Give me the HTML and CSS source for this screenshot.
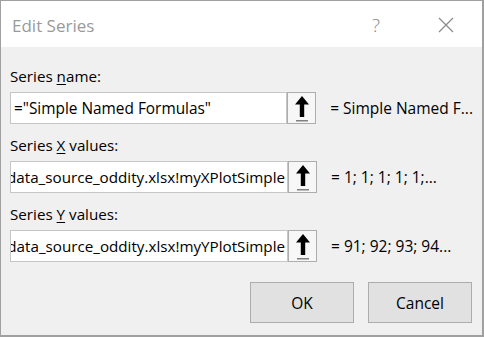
FILE: index.html
```html
<!DOCTYPE html>
<html>
<head>
<meta charset="utf-8">
<link rel="stylesheet" href="styles.css">
</head>
<body>
<div class="dialog">
  <div class="titlebar">
    <div class="title">Edit Series</div>
    <div class="help">?</div>
    <div class="close">
      <svg width="16" height="16" viewBox="0 0 16 16"><path d="M1 1L15 15M15 1L1 15" stroke="#8a8a8a" stroke-width="1.2" fill="none"/></svg>
    </div>
  </div>
  <div class="body">
    <div class="label">Series <u>n</u>ame:</div>
    <div class="row">
      <div class="field"><span class="val">="Simple Named Formulas"</span></div>
      <div class="pick"><svg width="14" height="26" viewBox="0 0 14 26"><path d="M7 0L0 8.5H4.8V21H9.2V8.5H14Z" fill="#000"/><rect x="1" y="24" width="12" height="1.5" fill="#808080"/></svg></div>
      <div class="result">= Simple Named F...</div>
    </div>
    <div class="label">Series <u>X</u> values:</div>
    <div class="row">
      <div class="field clip"><span class="val">data_source_oddity.xlsx!myXPlotSimple</span></div>
      <div class="pick"><svg width="14" height="26" viewBox="0 0 14 26"><path d="M7 0L0 8.5H4.8V21H9.2V8.5H14Z" fill="#000"/><rect x="1" y="24" width="12" height="1.5" fill="#808080"/></svg></div>
      <div class="result">= 1; 1; 1; 1; 1;...</div>
    </div>
    <div class="label">Series <u>Y</u> values:</div>
    <div class="row">
      <div class="field clip"><span class="val">data_source_oddity.xlsx!myYPlotSimple</span></div>
      <div class="pick"><svg width="14" height="26" viewBox="0 0 14 26"><path d="M7 0L0 8.5H4.8V21H9.2V8.5H14Z" fill="#000"/><rect x="1" y="24" width="12" height="1.5" fill="#808080"/></svg></div>
      <div class="result">= 91; 92; 93; 94...</div>
    </div>
    <div class="buttons">
      <div class="btn">OK</div>
      <div class="btn">Cancel</div>
    </div>
  </div>
</div>
</body>
</html>
```
FILE: styles.css
```css
html, body {
  margin: 0;
  padding: 0;
  background: #fff;
}
.dialog {
  width: 484px;
  height: 337px;
  box-sizing: border-box;
  border: 1px solid #a0a0a0;
  border-right-width: 2px;
  border-bottom-width: 2px;
  display: flex;
  flex-direction: column;
  font-family: "Open Sans", "Noto Sans", sans-serif;
  color: #000;
}
.titlebar {
  height: 46px;
  background: #fff;
  display: flex;
  align-items: center;
  flex-shrink: 0;
}
.title {
  font-size: 17px;
  color: #9a9a9a;
  padding-left: 11px;
  flex: 1;
  padding-top: 2px;
}
.help {
  font-size: 19px;
  font-weight: 300;
  color: #8a8a8a;
  width: 20px;
  margin-right: 46px;
  padding-top: 2px;
}
.close {
  width: 16px;
  height: 16px;
  margin-right: 28px;
  display: flex;
  padding-top: 2px;
}
.body {
  flex: 1;
  background: #f0f0f0;
  padding: 17px 9px 0 9px;
  font-size: 15px;
  display: flex;
  flex-direction: column;
}
.label {
  height: 24px;
  line-height: 24px;
  margin-bottom: 4px;
  font-size: 15.2px;
}
.label u {
  text-decoration-thickness: 1px;
  text-underline-offset: 2px;
}
.row {
  display: flex;
  align-items: center;
  height: 32px;
  margin-bottom: 9px;
}
.field {
  width: 278px;
  height: 32px;
  box-sizing: border-box;
  border: 1px solid #c6c6c6;
  background: #fff;
  display: flex;
  align-items: center;
  padding-left: 3px;
  overflow: hidden;
  white-space: nowrap;
  font-size: 15.4px;
}
.field.clip {
  justify-content: flex-end;
  padding-left: 0;
  padding-right: 2px;
  font-size: 15.2px;
}
.pick {
  width: 29px;
  height: 32px;
  box-sizing: border-box;
  border: 1px solid #adadad;
  background: #f7f7f7;
  display: flex;
  align-items: center;
  justify-content: center;
  padding-top: 1px;
}
.result {
  margin-left: 14px;
  font-size: 15.5px;
  white-space: nowrap;
}
.buttons {
  display: flex;
  justify-content: flex-end;
  gap: 14px;
  padding-right: 1px;
  margin-top: 11px;
}
.btn {
  width: 104px;
  height: 41px;
  box-sizing: border-box;
  border: 1px solid #adadad;
  background: #e1e1e1;
  display: flex;
  align-items: center;
  justify-content: center;
  font-size: 15.5px;
}
```
